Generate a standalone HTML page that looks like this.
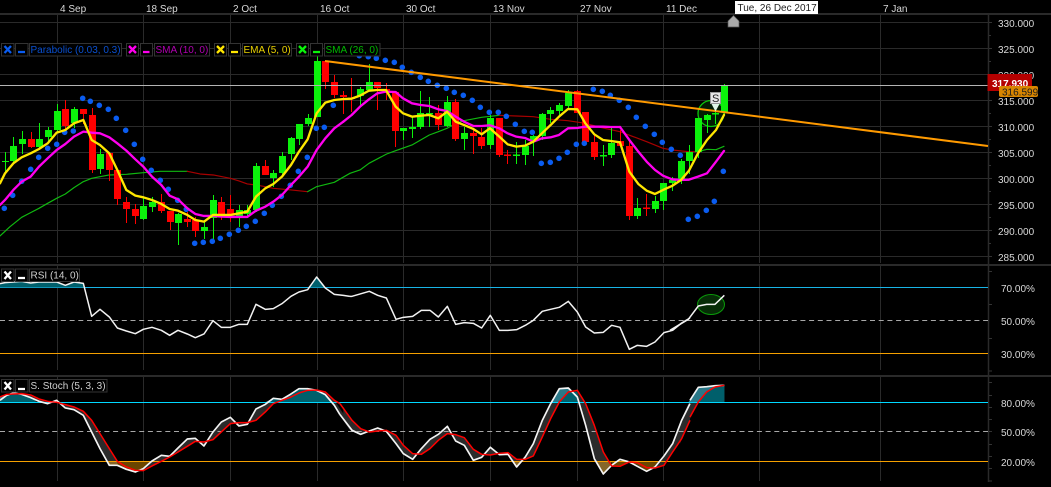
<!DOCTYPE html>
<html><head><meta charset="utf-8"><style>
html,body{margin:0;padding:0;background:#000;width:1051px;height:487px;overflow:hidden}
svg{display:block}
text{font-family:"Liberation Sans",Arial,sans-serif;font-size:10px}
</style></head><body>
<svg width="1051" height="487" viewBox="0 0 1051 487" xmlns="http://www.w3.org/2000/svg">
<rect width="1051" height="487" fill="#000"/>
<!-- grid -->
<path d="M0 22.5H988M0 48.5H988M0 74.5H988M0 100.5H988M0 126.5H988M0 152.5H988M0 178.5H988M0 204.5H988M0 230.5H988M0 256.5H988" stroke="#2a2a2a" fill="none"/>
<path d="M57.5 15V263M143.5 15V263M230.5 15V263M317.5 15V263M403.5 15V263M490.5 15V263M577.5 15V263M663.5 15V263M759.5 15V263M880.5 15V263
M57.5 266V370M143.5 266V370M230.5 266V370M317.5 266V370M403.5 266V370M490.5 266V370M577.5 266V370M663.5 266V370M759.5 266V370M880.5 266V370
M57.5 377V481M143.5 377V481M230.5 377V481M317.5 377V481M403.5 377V481M490.5 377V481M577.5 377V481M663.5 377V481M759.5 377V481M880.5 377V481" stroke="#2a2a2a" fill="none"/>
<path d="M0 14H1051M0 265H1051M0 376H1051" stroke="#2a2a2a" stroke-width="2" fill="none"/>
<path d="M988.5 14V482" stroke="#2a2a2a" stroke-width="1.5" fill="none"/>
<path d="M989 22.5h3M989 35.5h2M989 48.5h3M989 61.5h2M989 74.5h3M989 87.5h2M989 100.5h3M989 113.5h2M989 126.5h3M989 139.5h2M989 152.5h3M989 165.5h2M989 178.5h3M989 191.5h2M989 204.5h3M989 217.5h2M989 230.5h3M989 243.5h2M989 256.5h3M989 271.5h3M989 304.5h3M989 338.5h3M989 371h3M989 382.5h3M989 395.5h3M989 407.5h3M989 419.5h3M989 431.5h3M989 444.5h3M989 456.5h3M989 468.5h3M989 481h3" stroke="#333" fill="none"/>

<!-- SMA 26 -->
<g fill="none" stroke-linejoin="round" stroke-linecap="round">
<g transform="scale(.3333)">
<path stroke="#10b810" stroke-width="3.500" d="M0 708L30 680 65 652 92 638 117 625 143 610 170 595 196 582 222 563 250 545 275 535 300 530 328 525 379 523 430 518 480 514 562 514"/>
<path stroke="#a80000" stroke-width="3.500" d="M562 514L600 522 640 525 691 535 717 543 742 552 768 555 796 560 820 565 873 570 923 575"/>
<path stroke="#10b810" stroke-width="3.500" d="M923 575L950 560 1003 547 1050 520"/>
</g>
<g transform="translate(300,0) scale(.3333)">
<path stroke="#10b810" stroke-width="3.500" d="M150 520L180 510 207 490 260 462 287 452 336 435 388 405 415 395 441 385 467 370 492 362 545 352 598 346"/>
<path stroke="#a80000" stroke-width="3.500" d="M598 346L649 348 700 350 752 358 804 362 856 370 900 382"/>
</g>
<g transform="translate(600,0) scale(.3333)">
<path stroke="#a80000" stroke-width="3.500" d="M0 382L60 395 100 410 140 425 189 445 216 450 267 455 294 455"/>
<path stroke="#10b810" stroke-width="3.500" d="M294 455L321 448 348 449 372 439"/>
</g>
</g>

<!-- circle behind last candles -->
<circle cx="711" cy="113.5" r="13" fill="#021c02" stroke="#0cc80c" stroke-width="1.300"/>

<!-- wicks -->
<path fill="none" stroke="#0bf20b" d="M5.5 152V173M13.5 137V163M22.5 131V154M39.5 123V148M48.5 127V143M57.5 104V132M74.5 107V128M100.5 149V174M143.5 197V220M152.5 197V212M178.5 213V245M204.5 220V239M213.5 195V239M239.5 205V227M247.5 205V218M256.5 163V212M273.5 170V187M282.5 152V175M291.5 137V160M299.5 124V145M308.5 114V126M317.5 56V117M360.5 87V107M369.5 64V90M403.5 128V140M412.5 117V138M420.5 91V129M429.5 97V127M447.5 96V127M464.5 127V150M490.5 115V149M516.5 142V164M525.5 140V165M533.5 135V156M542.5 113V140M550.5 107V123M559.5 103V117M568.5 90V108M603.5 145V166M611.5 128V158M637.5 198V219M655.5 196V213M663.5 183V210M672.5 177V191M681.5 159V184M689.5 145V174M698.5 118V158M707.5 114V133M715.5 110V124M724.5 84V115"/>
<path fill="none" stroke="#ff0000" d="M31.5 132V148M65.5 100V132M83.5 109V124M92.5 108V173M109.5 153V181M117.5 170V205M126.5 197V223M135.5 204V224M161.5 194V213M170.5 211V230M187.5 212V227M195.5 217V237M221.5 197V220M230.5 195V222M265.5 160V175M325.5 61V89M334.5 75V98M343.5 91V114M351.5 78V112M377.5 82V110M386.5 83V100M395.5 92V147M438.5 105V130M455.5 99V141M473.5 128V154M481.5 128V149M499.5 118V157M507.5 150V164M577.5 90V113M585.5 112V143M594.5 135V160M620.5 130V147M629.5 140V220M646.5 194V216"/>
<!-- bodies -->
<path fill="none" stroke="#0bf20b" stroke-width="7" d="M5.5 161V162M13.5 146V161M22.5 139V144M39.5 139V147M48.5 130V137M57.5 111V130M74.5 109V123M100.5 154V169M143.5 206V219M152.5 202V207M178.5 214V223M204.5 227V231M213.5 200V218M239.5 210V216M247.5 210V214M256.5 166V210M273.5 173V178M282.5 156V173M291.5 138V154M299.5 124V139M308.5 118V124M317.5 61V117M360.5 89V96M369.5 82V90M403.5 128V131M412.5 127V129M420.5 113V127M429.5 113V114.500M447.5 102V126M464.5 133V139M490.5 118V145M516.5 154.500V156M525.5 146V155M533.5 136V140M542.5 114V136M550.5 110V114M559.5 105V111M568.5 93V106M603.5 155V156.500M611.5 143V155M637.5 208V216M655.5 201V209M663.5 183V201M672.5 180V183M681.5 161V180M689.5 152V161M698.5 118V152M707.5 115V120M715.5 113V114.500M724.5 86V112"/>
<path fill="none" stroke="#ff0000" stroke-width="7" d="M31.5 139V147M65.5 109V126M83.5 109V114M92.5 115V170M109.5 153V170M117.5 170V199M126.5 202V209M135.5 209V216M161.5 202V211M170.5 211V222M187.5 219V222M195.5 220V231M221.5 202V214M230.5 209V214M265.5 166V175M325.5 61V82M334.5 82V95M343.5 95V97M351.5 97.500V99M377.5 82V88M386.5 89V90.500M395.5 92V131M438.5 113V125M455.5 102V139M473.5 133V136M481.5 137V146M499.5 118V155M507.5 154.500V156M577.5 91V113M585.5 112V142M594.5 142V157M620.5 141V146M629.5 146V216M646.5 207.500V209"/>

<!-- parabolic dots -->
<g fill="#0a5cf0"><circle cx="4.300" cy="208.300" r="2.800"/><circle cx="12.700" cy="195.300" r="2.800"/><circle cx="21.700" cy="181.300" r="2.800"/><circle cx="30.700" cy="169.300" r="2.800"/><circle cx="38.700" cy="157.300" r="2.800"/><circle cx="47.700" cy="148.300" r="2.800"/><circle cx="56.700" cy="144.300" r="2.800"/><circle cx="64.700" cy="132.300" r="2.800"/><circle cx="73.300" cy="131" r="2.800"/><circle cx="82.700" cy="98.300" r="2.800"/><circle cx="90.300" cy="101.300" r="2.800"/><circle cx="99.300" cy="105.300" r="2.800"/><circle cx="108.300" cy="109.300" r="2.800"/><circle cx="116.300" cy="118.300" r="2.800"/><circle cx="125.700" cy="130.300" r="2.800"/><circle cx="134.300" cy="144.300" r="2.800"/><circle cx="142.700" cy="159.300" r="2.800"/><circle cx="151.300" cy="170.300" r="2.800"/><circle cx="160.300" cy="180.300" r="2.800"/><circle cx="168.300" cy="189.300" r="2.800"/><circle cx="177.700" cy="200.300" r="2.800"/><circle cx="186.300" cy="209.300" r="2.800"/><circle cx="194.700" cy="243.300" r="2.800"/><circle cx="203.300" cy="242.300" r="2.800"/><circle cx="212.300" cy="241.300" r="2.800"/><circle cx="220.300" cy="238.300" r="2.800"/><circle cx="229.300" cy="234.300" r="2.800"/><circle cx="238.300" cy="230.300" r="2.800"/><circle cx="246.300" cy="226.300" r="2.800"/><circle cx="255.300" cy="221.300" r="2.800"/><circle cx="264.300" cy="213.300" r="2.800"/><circle cx="272.300" cy="205.300" r="2.800"/><circle cx="281.300" cy="196.300" r="2.800"/><circle cx="290.300" cy="185.300" r="2.800"/><circle cx="298.300" cy="171.300" r="2.800"/><circle cx="307.300" cy="157.300" r="2.800"/><circle cx="316.300" cy="128.300" r="2.800"/><circle cx="324.300" cy="127.300" r="2.800"/><circle cx="333.300" cy="105.300" r="2.800"/><circle cx="359.300" cy="55.700" r="2.800"/><circle cx="368.300" cy="56.700" r="2.800"/><circle cx="376.300" cy="58.300" r="2.800"/><circle cx="385.300" cy="60.300" r="2.800"/><circle cx="394.300" cy="62.300" r="2.800"/><circle cx="402.300" cy="67.300" r="2.800"/><circle cx="411.300" cy="72.300" r="2.800"/><circle cx="420.300" cy="77.300" r="2.800"/><circle cx="428.300" cy="81.300" r="2.800"/><circle cx="437.300" cy="85.300" r="2.800"/><circle cx="446.300" cy="88.300" r="2.800"/><circle cx="454.300" cy="92.300" r="2.800"/><circle cx="463.300" cy="95.300" r="2.800"/><circle cx="472.300" cy="100.300" r="2.800"/><circle cx="480.300" cy="107.300" r="2.800"/><circle cx="489.300" cy="112.300" r="2.800"/><circle cx="498.300" cy="112.300" r="2.800"/><circle cx="506.300" cy="116.300" r="2.800"/><circle cx="515.300" cy="124.300" r="2.800"/><circle cx="524.300" cy="131.300" r="2.800"/><circle cx="532.300" cy="132.300" r="2.800"/><circle cx="541.300" cy="163.300" r="2.800"/><circle cx="550.300" cy="162.300" r="2.800"/><circle cx="559" cy="158.300" r="2.800"/><circle cx="567.300" cy="152.300" r="2.800"/><circle cx="576.300" cy="144.300" r="2.800"/><circle cx="584.300" cy="143.300" r="2.800"/><circle cx="593.300" cy="89.300" r="2.800"/><circle cx="602.300" cy="91.300" r="2.800"/><circle cx="610.300" cy="95.300" r="2.800"/><circle cx="619.300" cy="100.300" r="2.800"/><circle cx="628.300" cy="107.300" r="2.800"/><circle cx="636.300" cy="117.300" r="2.800"/><circle cx="645.300" cy="126.300" r="2.800"/><circle cx="654.300" cy="134.300" r="2.800"/><circle cx="662.300" cy="142.300" r="2.800"/><circle cx="671.300" cy="149.300" r="2.800"/><circle cx="680.300" cy="155.300" r="2.800"/><circle cx="688.300" cy="219.300" r="2.800"/><circle cx="697.300" cy="216.300" r="2.800"/><circle cx="706.300" cy="210.300" r="2.800"/><circle cx="714.300" cy="201.300" r="2.800"/><circle cx="723.300" cy="171.300" r="2.800"/></g>

<!-- magenta / yellow -->
<g fill="none" stroke-linejoin="round" stroke-linecap="round">
<g transform="scale(.3333)">
<path stroke="#ff00ee" stroke-width="7" d="M0 615L15 600 40 570 65 545 92 530 117 500 143 475 170 450 196 432 222 410 250 395 275 398 300 400 328 412 352 430 379 452 406 478 430 500 456 530 484 555 509 587 534 598 562 625 586 642 612 648 639 648 664 650 691 651 717 651 742 651 768 632 796 620 820 605 846 585 873 555 897 530 923 500 950 450 976 415 1003 385 1030 365"/>
</g>
<g transform="translate(300,0) scale(.3333)">
<path stroke="#ff00ee" stroke-width="7" d="M130 365L155 345 180 320 207 298 232 280 258 275 287 276 309 295 336 310 362 315 388 318 415 328 441 333 467 350 492 365 520 378 545 378 570 376 598 385 623 400 649 410 675 414 700 425 726 415 752 412 777 405 804 385 832 384 856 380 883 380 909 380 933 381 960 381"/>
</g>
<g transform="translate(600,0) scale(.3333)">
<path stroke="#ff00ee" stroke-width="7" d="M60 381L88 420 115 455 140 485 165 510 189 527 216 538 243 540 267 539 294 530 321 520 348 485 372 453"/>
</g>
<g transform="scale(.3333)">
<path stroke="#ffe600" stroke-width="7" d="M0 550L15 520 40 490 65 472 92 460 117 447 143 430 170 398 196 390 222 370 250 360 275 420 300 435 328 460 352 510 379 570 406 587 430 592 456 600 484 612 509 627 534 632 562 645 586 660 612 665 639 645 664 645 691 645 717 640 742 635 768 590 796 565 820 552 846 530 873 495 897 455 923 418 950 340 976 308 1003 300 1030 297"/>
</g>
<g transform="translate(300,0) scale(.3333)">
<path stroke="#ffe600" stroke-width="7" d="M130 297L155 296 180 287 207 272 232 270 258 270 287 320 309 340 336 350 362 347 388 345 415 355 441 335 467 365 492 375 520 387 545 403 570 385 598 410 623 433 649 440 675 437 700 425 726 400 752 375 777 350 804 327 832 328 856 370 883 403 909 420 933 423 960 427"/>
</g>
<g transform="translate(600,0) scale(.3333)">
<path stroke="#ffe600" stroke-width="7" d="M60 427L88 515 115 552 140 572 165 582 189 570 216 558 243 540 267 512 294 460 321 420 348 390 372 345"/>
</g>
</g>

<!-- white price line & trend line -->
<path d="M0 85.500H988" stroke="#b4b4b4" stroke-width="1" fill="none"/>
<path d="M325 61L988 146" stroke="#ff9a00" stroke-width="2" fill="none"/>

<!-- S marker -->
<path d="M711 103L720 103 715.500 111.500Z" fill="#dff5e6"/>
<rect x="710.500" y="92.500" width="10" height="11" fill="#e6e6e6" stroke="#999"/>
<text x="712" y="102" fill="#222" style="font-size:11px">S</text>

<!-- RSI -->
<path d="M0 287.500H988" stroke="#18b4e6" fill="none"/>
<path d="M0 320.500H988" stroke="#a8a8a8" stroke-dasharray="5 3.700" fill="none"/>
<path d="M0 353.500H988" stroke="#f5a000" fill="none"/>
<g transform="translate(0,262) scale(.3333)">
<path fill="#005f6b" d="M0 76V65L15 62 40 60 65 58 92 63 117 60 143 60 170 60 196 70 222 60 250 64 253 76ZM925 76L950 45 975 76Z"/>
<path fill="none" stroke="#f2f2f2" stroke-width="4.500" stroke-linejoin="round" d="M0 65L15 62 40 60 65 58 92 63 117 60 143 60 170 60 196 70 222 60 250 64 275 163 300 142 328 165 352 198 379 207 406 215 430 202 456 196 484 205 509 220 534 205 562 216 586 227 612 216 639 176 664 196 691 196 717 187 742 187 768 127 796 142 820 140 846 125 873 103 897 90 923 83 950 45 976 78 1003 97 1030 100 1050 103"/>
</g>
<ellipse cx="711" cy="304.500" rx="13.500" ry="10" fill="#062c06" stroke="#0a9a0a" stroke-width="1"/>
<g transform="translate(340,262) scale(.3333)">
<path fill="none" stroke="#f2f2f2" stroke-width="4.500" stroke-linejoin="round" d="M30 103L36 103 88 88 113 100 139 108 168 172 190 166 218 163 244 145 270 145 295 165 322 133 347 187 373 182 400 184 425 198 451 160 478 205 504 205 530 203 556 190 580 175 607 148 632 142 658 136 685 118 712 150 737 195 763 213 790 211 815 190 840 196 868 262 892 250 920 253 945 240 972 212 998 205 1025 183 1050 168"/>
</g>
<g transform="translate(680,262) scale(.3333)">
<path fill="none" stroke="#f2f2f2" stroke-width="4.500" stroke-linejoin="round" d="M-30 205L0 187 25 172 55 132 80 127 105 127 133 100"/>
</g>

<!-- Stochastic fills -->
<g transform="translate(0,262) scale(.3333)">
<path fill="#2b2b2b" fill-rule="evenodd" d="M0 700V415L20 400 40 393 65 397 92 407 117 418 143 425 170 415 196 438 222 443 250 460 275 510 300 560 328 610 352 610 379 622 406 630 430 620 456 597 484 580 509 583 534 558 562 531 586 529 612 552 639 510 664 480 691 466 717 492 742 487 768 441 796 427 820 409 846 412 873 396 897 380 923 380 950 385 976 398 1003 430 1030 475 1050 505V700ZM0 700V405L20 397 40 396 65 395 92 399 117 411 143 418 170 421 196 428 222 435 250 448 275 475 300 515 328 560 352 598 379 615 406 625 430 626 456 612 484 598 509 585 534 570 562 553 586 538 612 540 639 533 664 510 691 485 717 482 742 482 768 475 796 450 820 425 846 415 873 405 897 393 923 385 950 384 976 390 1003 415 1030 455 1050 480V700Z"/>
<path fill="#005f6b" d="M0 421V410L20 398 40 393 65 395 92 403 110 421ZM795 421L820 409 846 412 873 396 897 380 923 380 950 384 976 395 1000 421Z"/>
<path fill="#2a7888" d="M0 421V405L20 397 0 415ZM795 421L820 409 800 421Z"/>
<path fill="#6a4500" d="M322 598L328 610 352 610 379 622 406 630 430 626 450 598Z"/>
<path fill="#86662a" d="M322 598L328 610 352 610 352 598Z"/>
</g>
<g transform="translate(340,262) scale(.3333)">
<path fill="#2b2b2b" fill-rule="evenodd" d="M10 700V458L36 505 62 517 88 507 113 498 139 508 168 545 190 575 218 592 244 560 270 532 295 517 322 493 347 537 373 550 400 595 425 586 451 556 478 578 504 577 530 615 556 585 580 545 607 475 632 425 658 380 685 378 712 405 737 490 763 590 790 636 815 610 840 592 868 600 892 613 920 628 945 615 972 582 998 545 1025 475 1050 425V700ZM10 700V435L36 475 62 500 88 510 113 507 139 505 168 520 190 550 218 575 244 577 270 560 295 535 322 515 347 518 373 527 400 562 425 577 451 579 478 574 504 572 530 592 556 592 580 582 607 525 632 470 658 420 685 390 712 385 737 425 763 490 790 570 815 612 840 613 868 600 892 602 920 617 945 618 972 610 998 570 1025 530 1050 475V700Z"/>
<path fill="#2a7888" d="M632 421L658 380 685 378 705 395 717 421Z"/>
<path fill="#005f6b" d="M660 421L685 390 712 390 717 421Z"/>
<path fill="#86662a" d="M517 598L530 615 545 598ZM770 598L790 636 810 612 815 598Z"/>
<path fill="#6a4500" d="M815 598V612L840 613 868 600 892 608 920 628 945 618 958 598Z"/>
</g>
<g transform="translate(680,262) scale(.3333)">
<path fill="#2b2b2b" d="M0 480L25 425 55 376 55 421 25 480 0 545Z"/>
<path fill="#2a7888" d="M25 421L55 376 80 374 105 371 133 370V421Z"/>
<path fill="#005f6b" d="M55 421L80 390 105 375 133 370V421Z"/>
</g>
<path d="M0 402.500H988" stroke="#00d8ff" fill="none"/>
<path d="M0 431.500H988" stroke="#a8a8a8" stroke-dasharray="5 3.700" fill="none"/>
<path d="M0 461.500H988" stroke="#f5a000" fill="none"/>
<g fill="none" stroke-linejoin="round">
<g transform="translate(0,262) scale(.3333)">
<path stroke="#f4f4f4" stroke-width="5" d="M0 415L20 400 40 393 65 397 92 407 117 418 143 425 170 415 196 438 222 443 250 460 275 510 300 560 328 610 352 610 379 622 406 630 430 620 456 597 484 580 509 583 534 558 562 531 586 529 612 552 639 510 664 480 691 466 717 492 742 487 768 441 796 427 820 409 846 412 873 396 897 380 923 380 950 385 976 398 1003 430 1020 458"/>
<path stroke="#f00" stroke-width="4.500" d="M0 405L20 397 40 396 65 395 92 399 117 411 143 418 170 421 196 428 222 435 250 448 275 475 300 515 328 560 352 598 379 615 406 625 430 626 456 612 484 598 509 585 534 570 562 553 586 538 612 540 639 533 664 510 691 485 717 482 742 482 768 475 796 450 820 425 846 415 873 405 897 393 923 385 950 384 976 390 1003 415 1020 425"/>
</g>
<g transform="translate(340,262) scale(.3333)">
<path stroke="#f4f4f4" stroke-width="5" d="M0 458L36 505 62 517 88 507 113 498 139 508 168 545 190 575 218 592 244 560 270 532 295 517 322 493 347 537 373 550 400 595 425 586 451 556 478 578 504 577 530 615 556 585 580 545 607 475 632 425 658 380 685 378 712 405 737 490 763 590 790 636 815 610 840 592 868 600 892 613 920 628 945 615 972 582 998 545 1025 475 1050 425"/>
<path stroke="#f00" stroke-width="4.500" d="M0 425L36 475 62 500 88 510 113 507 139 505 168 520 190 550 218 575 244 577 270 560 295 535 322 515 347 518 373 527 400 562 425 577 451 579 478 574 504 572 530 592 556 592 580 582 607 525 632 470 658 420 685 390 712 385 737 425 763 490 790 570 815 612 840 613 868 600 892 602 920 617 945 618 972 610 998 570 1025 530 1050 475"/>
</g>
<g transform="translate(680,262) scale(.3333)">
<path stroke="#f4f4f4" stroke-width="5" d="M30 415L55 376 80 374 105 371 133 370"/>
<path stroke="#f00" stroke-width="4.500" d="M30 465L55 420 80 390 105 375 133 370"/>
</g>
</g>

<!-- date axis -->
<g fill="#d8d8d8">
<text x="60" y="12">4 Sep</text>
<text x="146" y="12">18 Sep</text>
<text x="233" y="12">2 Oct</text>
<text x="320" y="12">16 Oct</text>
<text x="406" y="12">30 Oct</text>
<text x="493" y="12">13 Nov</text>
<text x="580" y="12">27 Nov</text>
<text x="666" y="12">11 Dec</text>
<text x="883" y="12">7 Jan</text>
</g>
<rect x="735" y="1" width="83" height="13" fill="#fff"/>
<text x="737.500" y="11" fill="#222">Tue, 26 Dec 2017</text>
<path d="M728 27V21L733.500 15.500 739 21V27Z" fill="#aaa" stroke="#555" stroke-width=".7"/>

<!-- price axis -->
<g fill="#d8d8d8">
<text x="998" y="27">330.000</text>
<text x="998" y="53">325.000</text>
<text x="998" y="79">320.000</text>
<text x="998" y="105">315.000</text>
<text x="998" y="131">310.000</text>
<text x="998" y="157">305.000</text>
<text x="998" y="183">300.000</text>
<text x="998" y="209">295.000</text>
<text x="998" y="235">290.000</text>
<text x="998" y="261">285.000</text>
<text x="1001" y="292">70.00%</text>
<text x="1001" y="325">50.00%</text>
<text x="1001" y="358">30.00%</text>
<text x="1001" y="407">80.00%</text>
<text x="1001" y="436">50.00%</text>
<text x="1001" y="466">20.00%</text>
</g>
<rect x="987.500" y="74" width="44.500" height="17" fill="#b40000"/>
<text x="992" y="87" fill="#fff" font-weight="bold">317.930</text>
<rect x="999" y="86" width="39" height="11" rx="2" fill="#d98600"/>
<text x="1002" y="95.500" fill="#1c1c1c">316.599</text>

<!-- legends -->
<g fill="#000" stroke="#333">
<rect x="1.500" y="43.500" width="12.500" height="12.500"/><rect x="15.500" y="43.500" width="12.500" height="12.500"/><rect x="29.500" y="43.500" width="92" height="12.500"/>
<rect x="126.500" y="43.500" width="12" height="12.500"/><rect x="140.500" y="43.500" width="12" height="12.500"/><rect x="154.500" y="43.500" width="55" height="12.500"/>
<rect x="214.500" y="43.500" width="12" height="12.500"/><rect x="228.500" y="43.500" width="12" height="12.500"/><rect x="242.500" y="43.500" width="49" height="12.500"/>
<rect x="296.500" y="43.500" width="12" height="12.500"/><rect x="310.500" y="43.500" width="12" height="12.500"/><rect x="324.500" y="43.500" width="55.500" height="12.500"/>
<rect x="1.500" y="269" width="12.500" height="12.500"/><rect x="15.500" y="269" width="12.500" height="12.500"/><rect x="29.500" y="269" width="50" height="12.500"/>
<rect x="1.500" y="379.500" width="12.500" height="12.500"/><rect x="15.500" y="379.500" width="12.500" height="12.500"/><rect x="29.500" y="379.500" width="77.500" height="12.500"/>
</g>
<g fill="none" stroke-width="2.300">
<path stroke="#0a5cf0" d="M4.500 46L11 53M11 46L4.500 53M18 52H25"/>
<path stroke="#ff00ee" d="M129 46L136 53M136 46L129 53M143 52H149.500"/>
<path stroke="#ffe600" d="M217 46L224 53M224 46L217 53M231 52H238"/>
<path stroke="#0bf20b" d="M299 46L306 53M306 46L299 53M313 52H320"/>
<path stroke="#fff" d="M4.500 271.500L11 279M11 271.500L4.500 279M18 278H25"/>
<path stroke="#fff" d="M4.500 382L11 389.500M11 382L4.500 389.500M18 389H25"/>
</g>
<text x="30.500" y="53" fill="#0a50d0">Parabolic (0.03, 0.3)</text>
<text x="155.500" y="53" fill="#b000b0">SMA (10, 0)</text>
<text x="243.500" y="53" fill="#e8d000">EMA (5, 0)</text>
<text x="325.500" y="53" fill="#00b800">SMA (26, 0)</text>
<text x="30.500" y="278.500" fill="#cfcfcf">RSI (14, 0)</text>
<text x="30.500" y="389" fill="#cfcfcf">S. Stoch (5, 3, 3)</text>
</svg>
</body></html>
